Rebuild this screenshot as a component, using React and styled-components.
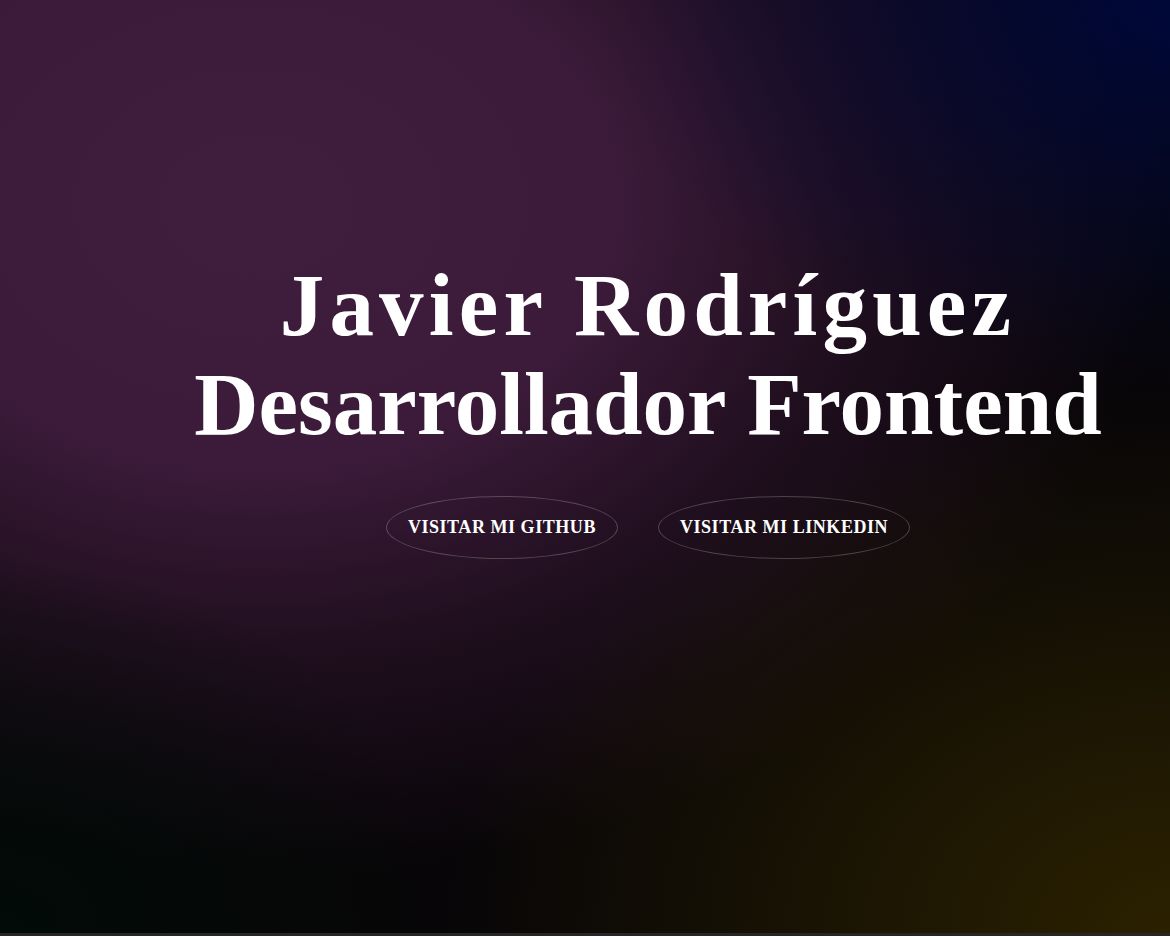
import React from "react";
import styled, { createGlobalStyle } from "styled-components";

const Global = createGlobalStyle`
  html, body { margin: 0; padding: 0; background: #262626; }
  body { font-family: "Liberation Serif", "Times New Roman", serif; }
  * { box-sizing: border-box; }
`;

const Hero = styled.section`
  height: 933px;
  display: flex;
  flex-direction: column;
  align-items: center;
  padding: 256px 0 0 126px;
  background:
    radial-gradient(ellipse 48% 42% at 100% 0%, #000839 0%, rgba(0, 8, 57, 0.6) 40%, rgba(0, 8, 57, 0) 100%),
    radial-gradient(ellipse 62% 58% at 100% 100%, #2b2100 0%, rgba(43, 33, 0, 0.55) 45%, rgba(43, 33, 0, 0) 100%),
    radial-gradient(ellipse 38% 40% at 0% 100%, #020b07 0%, rgba(2, 11, 7, 0) 100%),
    radial-gradient(ellipse 78% 72% at 22% 22%, #3f1d3d 0%, #3c1b3a 38%, rgba(50, 22, 48, 0.6) 65%, rgba(40, 18, 38, 0) 100%),
    #070507;
`;

const Title = styled.h1`
  margin: 0;
  font-family: "Liberation Serif", "Times New Roman", serif;
  font-weight: 700;
  font-size: 89px;
  line-height: 99px;
  color: #ffffff;
  text-align: center;
`;

const Line = styled.span`
  display: block;
  letter-spacing: ${(p) => p.$spacing || "0px"};
`;

const Actions = styled.div`
  display: flex;
  gap: 40px;
  margin-top: 42px;
`;

const PillLink = styled.a`
  display: inline-block;
  padding: 20px 21px;
  border: 1px solid rgba(255, 255, 255, 0.22);
  border-radius: 50%;
  color: #ffffff;
  text-decoration: none;
  text-transform: uppercase;
  font-family: "Liberation Serif", "Times New Roman", serif;
  font-weight: 700;
  font-size: 18px;
  letter-spacing: 0.55px;
  line-height: 21px;
  white-space: nowrap;
`;

const Next = styled.section`
  height: 40px;
  background: #262626;
`;

export default function App() {
  return (
    <>
      <Global />
      <Hero>
        <Title>
          <Line $spacing="5.2px">Javier Rodríguez</Line>
          <Line $spacing="0px">Desarrollador Frontend</Line>
        </Title>
        <Actions>
          <PillLink href="#github">Visitar mi GitHub</PillLink>
          <PillLink href="#linkedin">Visitar mi LinkedIn</PillLink>
        </Actions>
      </Hero>
      <Next />
    </>
  );
}
